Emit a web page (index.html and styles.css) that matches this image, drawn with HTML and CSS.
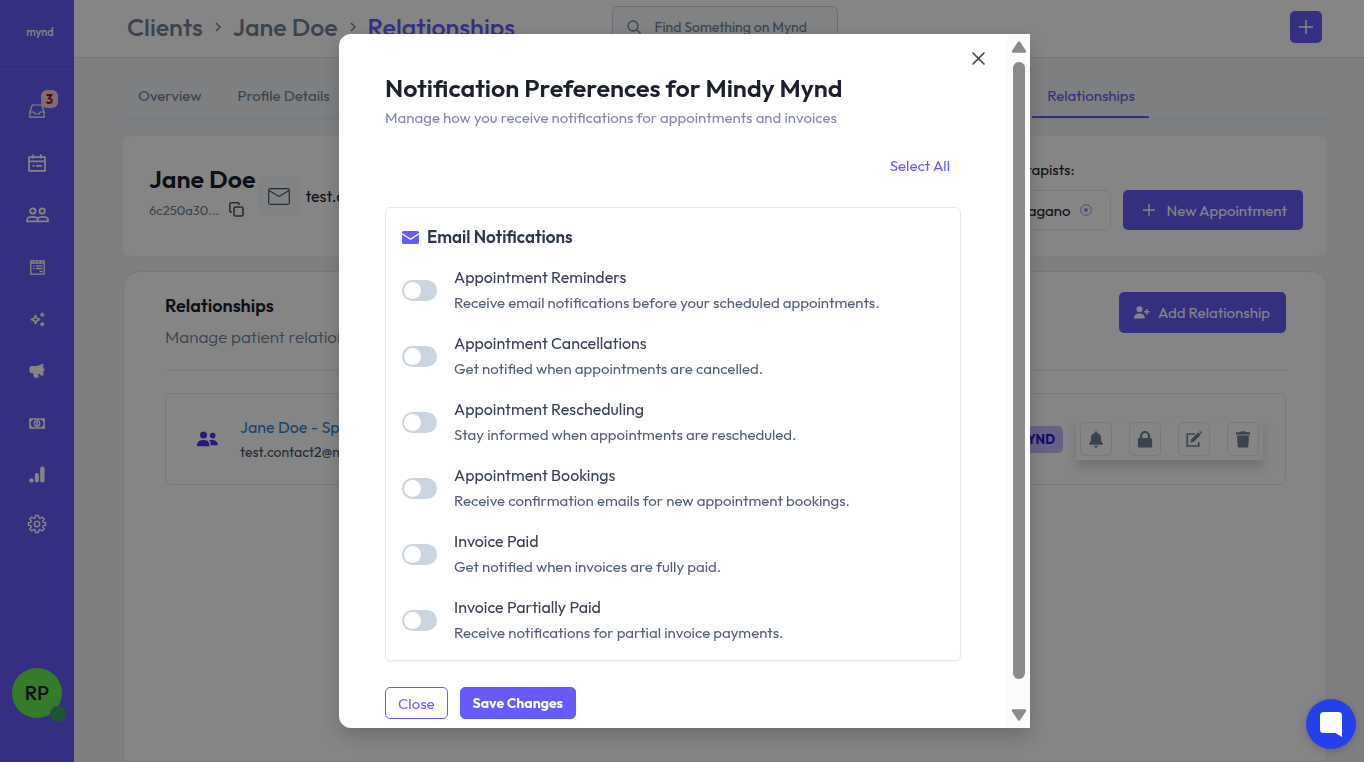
FILE: index.html
```html
<!DOCTYPE html>
<html lang="en">
<head>
    <meta charset="UTF-8">
    <meta name="viewport" content="width=device-width, initial-scale=1.0">
    <title>Mynd - Relationships</title>
    <link rel="stylesheet" href="styles.css">
</head>

<body>
    <aside class="sidebar">
        <div class="logo">mynd</div>
        <nav class="side-nav">
            <a href="#" aria-label="Inbox">
                <svg width="16" height="14" viewBox="0 0 16 14" fill="none" stroke="currentColor" stroke-width="1.2" stroke-linejoin="round"><path d="M.8 8 3.4 1h9.2l2.6 7v5.2H.8V8h4l1 2h4.4l1-2h4"/></svg>
                <span class="badge">3</span>
            </a>
            <a href="#" aria-label="Calendar">
                <svg width="18" height="18" viewBox="0 0 18 18" fill="none" stroke="currentColor" stroke-width="1.7" stroke-linejoin="round"><path d="M1 3.2h16v13.6H1zM1 7.4h16M5.2.4v4M12.8.4v4"/><path d="M4.6 11.8h1.8M8 11.8h6"/></svg>
            </a>
            <a href="#" aria-label="Clients">
                <svg width="23" height="16" viewBox="0 0 23 16" fill="none" stroke="currentColor" stroke-width="1.8" stroke-linejoin="round"><circle cx="6.8" cy="4" r="2.7"/><circle cx="16.2" cy="4" r="2.7"/><path d="M1 14.4v-1.6c0-2 3-3 5.600-3s5 1 5 3v1.600zM11.600 14.400H22v-1.600c0-2-3-3-5.600-3-2 0-3.600.5-4.600 1.600"/></svg>
            </a>
            <a href="#" aria-label="Forms">
                <svg width="15" height="15" viewBox="0 0 15 15" fill="none" stroke="currentColor" stroke-width="1.3"><path d="M.8.8h13.400v13.400H.8zM1 3.200h13M3 5.800h1.500M6 5.800h6.500M3 8.500h1.500M6 8.500h6.500M9.500 11.500h3M3.500 1v2M7 1v2M10.500 1v2"/></svg>
            </a>
            <a href="#" aria-label="Assistant">
                <svg width="15" height="15" viewBox="0 0 15 15" fill="none" stroke="currentColor" stroke-width="1.6" stroke-linejoin="round"><path d="m5.500 3.300 1.200 3 3 1.200-3 1.200-1.200 3-1.200-3-3-1.200 3-1.200z"/><path d="M12.300.6v4.400M10.100 2.800h4.400M12.300 10v4.400M10.100 12.200h4.400"/></svg>
            </a>
            <a href="#" aria-label="Marketing">
                <svg width="16" height="16" viewBox="0 0 16 16" fill="currentColor"><path d="M13 .8c.7-.4 1.300 0 1.300.7v3.700c.7.2 1.200.8 1.200 1.600s-.5 1.400-1.200 1.600v3.700c0 .8-.7 1.100-1.300.6-1.300-1.100-2.700-1.900-4.200-2.300.1.900.3 1.700.8 2.400.5.8.2 2-.9 2H6.200c-.6 0-1-.3-1.200-.8-.5-1.200-.8-2.500-.8-3.700H3a2.500 2.500 0 0 1-2.500-2.500V5.500A2.500 2.500 0 0 1 3 3h4c2.300 0 4.400-.9 6-2.200z"/></svg>
            </a>
            <a href="#" aria-label="Billing">
                <svg width="16" height="11" viewBox="0 0 16 11" fill="none" stroke="currentColor"><path stroke-width="1.5" d="M.9.9h14.200v9.200H.9z"/><circle cx="8" cy="5.500" r="2.700" stroke-width="1.400"/><path stroke-width="1.600" d="M8 4v3M1 3.400 3.500 1M15 3.400 12.500 1M1 7.600 3.500 10M15 7.600 12.500 10"/></svg>
            </a>
            <a href="#" class="short" aria-label="Reports">
                <svg width="16" height="17" viewBox="0 0 16 17" fill="currentColor"><circle cx="2.400" cy="14.400" r="2.200"/><rect x="5.900" y="7" width="4" height="9.600" rx="2"/><rect x="11.200" y=".6" width="4.300" height="16" rx="2"/></svg>
            </a>
            <a href="#" class="short" aria-label="Settings">
                <svg width="20" height="20" viewBox="0 0 24 24" fill="none" stroke="currentColor" stroke-width="1.7" stroke-linejoin="round"><circle cx="12" cy="12" r="3.200"/><path d="m10.200 1.800-.5 3-1.500.6-2.500-1.700L3.400 6l1.800 2.500-.6 1.500-3 .5v3l3 .5.600 1.500-1.800 2.500 2.300 2.300 2.500-1.700 1.500.6.500 3h3.600l.5-3 1.500-.6 2.500 1.700 2.300-2.300-1.800-2.500.6-1.500 3-.5v-3l-3-.5-.6-1.500L20.600 6l-2.300-2.300-2.500 1.700-1.500-.6-.5-3z"/></svg>
            </a>
        </nav>
        <div class="avatar">RP<span class="status"></span></div>
    </aside>

    <div class="page">
        <header class="topbar">
            <nav class="breadcrumb">
                <a href="#">Clients</a>
                <svg width="6" height="10" viewBox="0 0 6 10" fill="none" stroke="currentColor" stroke-width="1.5"><path d="m1 1 4 4-4 4"/></svg>
                <a href="#">Jane Doe</a>
                <svg width="6" height="10" viewBox="0 0 6 10" fill="none" stroke="currentColor" stroke-width="1.5"><path d="m1 1 4 4-4 4"/></svg>
                <a href="#" class="current">Relationships</a>
            </nav>
            <div class="search">
                <svg width="14" height="14" viewBox="0 0 14 14" fill="none" stroke="currentColor" stroke-width="1.3" stroke-linecap="round"><circle cx="6" cy="6" r="5"/><path d="m9.700 9.700 3.500 3.500"/></svg>
                <input type="text" aria-label="Search" placeholder="Find Something on Mynd">
            </div>
            <button class="add-btn" aria-label="Add">
                <svg width="14" height="14" viewBox="0 0 14 14" stroke="currentColor" stroke-width="1.5"><path d="M7 0v14M0 7h14"/></svg>
            </button>
        </header>

        <main>
            <nav class="tabs">
                <a href="#">Overview</a>
                <a href="#">Profile Details</a>
                <a href="#" class="active">Relationships</a>
            </nav>

            <section class="card profile">
                <div class="who">
                    <h2>Jane Doe</h2>
                    <div class="client-id">
                        <span>6c250a30...</span>
                        <svg width="15" height="15" viewBox="0 0 15 15" fill="none" stroke="currentColor" stroke-width="1.6" stroke-linejoin="round"><rect x="5" y="5" width="9" height="9" rx="1.500"/><path d="M3 10H2a1.200 1.200 0 0 1-1.200-1.200V2A1.200 1.200 0 0 1 2 .8h6.800A1.200 1.200 0 0 1 10 2v1"/></svg>
                    </div>
                </div>
                <button class="mail-btn" aria-label="Email">
                    <svg width="22" height="17" viewBox="0 0 22 17" fill="none" stroke="currentColor" stroke-width="1.2" stroke-linejoin="round"><rect x=".7" y=".7" width="20.600" height="15.600" rx="1.500"/><path d="m1 2.500 10 6 10-6"/></svg>
                </button>
                <span class="mail">test.contact</span>
                <div class="therapists">
                    <p>Therapists:</p>
                    <div class="therapist">
                        <span>Pagano</span>
                        <svg width="12" height="12" viewBox="0 0 12 12" fill="none" stroke="currentColor"><circle cx="6" cy="6" r="5.300"/><circle cx="6" cy="6" r="1.500" fill="currentColor"/></svg>
                    </div>
                </div>
                <button class="btn new-btn">
                    <svg width="12" height="12" viewBox="0 0 12 12" stroke="currentColor" stroke-width="1.4"><path d="M6 0v12M0 6h12"/></svg>
                    New Appointment
                </button>
            </section>

            <section class="card relations">
                <div class="relations-head">
                    <div>
                        <h3>Relationships</h3>
                        <p>Manage patient relationships</p>
                    </div>
                    <button class="btn">
                        <svg width="16" height="13" viewBox="0 0 16 13" fill="currentColor"><circle cx="5.500" cy="3.200" r="3"/><path d="M0 12.500C0 9 2 7.500 5.500 7.500s5.300 1.500 5.300 5zM12.100 3h1.500v2h2v1.500h-2v2h-1.500v-2h-2V5h2z"/></svg>
                        Add Relationship
                    </button>
                </div>
                <div class="relation">
                    <svg class="people" width="21" height="16" viewBox="0 0 21 16" fill="currentColor"><circle cx="6.500" cy="4" r="3.500"/><circle cx="15.700" cy="4.600" r="2.800"/><path d="M0 15.300C0 11 2 9 6.500 9s6 2 6 6.300zM13.800 14.300c0-2.500-.7-4-1.800-5 4.800-1.100 8.800.2 8.800 5z"/></svg>
                    <div class="contact">
                        <a href="#">Jane Doe - Spouse</a>
                        <p>test.contact2@mynd.com</p>
                    </div>
                    <span class="tag">MYND</span>
                    <div class="actions">
                        <button aria-label="Notifications">
                            <svg width="14" height="17" viewBox="0 0 14 17" fill="currentColor"><path d="M6 1.300a1 1 0 0 1 2 0v.4c2.500.5 4 2.500 4 5 0 3.300.8 4.600 1.800 5.700.5.600.1 1.400-.6 1.400H.8c-.7 0-1.100-.8-.6-1.400C1.200 11.300 2 10 2 6.700c0-2.500 1.500-4.500 4-5zM5 14.800h4a2 2 0 0 1-4 0z"/></svg>
                        </button>
                        <button aria-label="Permissions">
                            <svg width="16" height="17" viewBox="0 0 16 17"><rect x=".8" y="7" width="14.400" height="9.500" rx="1.500" fill="currentColor"/><path d="M4 8V5a4 4 0 0 1 8 0v3" fill="none" stroke="currentColor" stroke-width="2.200"/></svg>
                        </button>
                        <button aria-label="Edit">
                            <svg width="17" height="16" viewBox="0 0 17 16" fill="none" stroke="currentColor"><path d="M9 3H1.200v12h11.600v-4" stroke-width="1.600"/><path d="m6 10 7.500-7.500" stroke-width="3.400"/><path d="m14.300 1.700.8-.8" stroke-width="3"/><path d="M4.400 11.600 5 8.800l2.200 2.200z" fill="currentColor" stroke="none"/></svg>
                        </button>
                        <button aria-label="Delete">
                            <svg width="14" height="17" viewBox="0 0 14 17" fill="currentColor"><path d="M0 1.300h4.200L5 .2h4l.8 1.100H14v2.100H0zM1 4.500h12l-.7 10.800c0 .8-.6 1.300-1.400 1.300H3.100c-.8 0-1.400-.5-1.400-1.300z"/></svg>
                        </button>
                    </div>
                </div>
            </section>
        </main>
    </div>

    <div class="overlay">
        <div class="modal" role="dialog" aria-labelledby="modal-title">
            <div class="modal-content">
                <button class="close-x" aria-label="Close dialog">
                    <svg width="13" height="13" viewBox="0 0 13 13" stroke="currentColor" stroke-width="1.6" stroke-linecap="round"><path d="m1 1 11 11M12 1 1 12"/></svg>
                </button>
                <h1 id="modal-title">Notification Preferences for Mindy Mynd</h1>
                <p class="subtitle">Manage how you receive notifications for appointments and invoices</p>
                <button class="select-all">Select All</button>

                <form id="preferences">
                    <h2>
                        <svg width="17" height="13" viewBox="0 0 17 13" fill="currentColor"><path d="M1.500 0h14A1.400 1.400 0 0 1 17 1.400v.5L8.500 7.400 0 1.900v-.5A1.400 1.400 0 0 1 1.500 0z"/><path d="M0 3.600 8.500 9 17 3.600v8A1.400 1.400 0 0 1 15.500 13h-14A1.400 1.400 0 0 1 0 11.600z"/></svg>
                        Email Notifications
                    </h2>
                    <div class="pref">
                        <input type="checkbox" id="reminders">
                        <label for="reminders">Appointment Reminders <small>Receive email notifications before your scheduled appointments.</small></label>
                    </div>
                    <div class="pref">
                        <input type="checkbox" id="cancellations">
                        <label for="cancellations">Appointment Cancellations <small>Get notified when appointments are cancelled.</small></label>
                    </div>
                    <div class="pref">
                        <input type="checkbox" id="rescheduling">
                        <label for="rescheduling">Appointment Rescheduling <small>Stay informed when appointments are rescheduled.</small></label>
                    </div>
                    <div class="pref">
                        <input type="checkbox" id="bookings">
                        <label for="bookings">Appointment Bookings <small>Receive confirmation emails for new appointment bookings.</small></label>
                    </div>
                    <div class="pref">
                        <input type="checkbox" id="paid">
                        <label for="paid">Invoice Paid <small>Get notified when invoices are fully paid.</small></label>
                    </div>
                    <div class="pref">
                        <input type="checkbox" id="partially-paid">
                        <label for="partially-paid">Invoice Partially Paid <small>Receive notifications for partial invoice payments.</small></label>
                    </div>
                </form>

                <div class="modal-buttons">
                    <button class="outline">Close</button>
                    <button class="save" type="submit" form="preferences">Save Changes</button>
                </div>
            </div>
            <div class="scrollbar">
                <svg width="16" height="12" viewBox="0 0 16 12" fill="currentColor"><path d="M7 .8a1.300 1.300 0 0 1 2 0l6 9c.5 1 0 2-1 2H2c-1 0-1.500-1-1-2z"/></svg>
                <span class="thumb"></span>
                <svg width="16" height="12" viewBox="0 0 16 12" fill="currentColor"><path d="M7 11.200a1.300 1.300 0 0 0 2 0l6-9c.5-1 0-2-1-2H2c-1 0-1.500 1-1 2z"/></svg>
            </div>
        </div>
    </div>

    <button class="chat" aria-label="Open chat">
        <svg width="22" height="25" viewBox="0 0 22 25" fill="#fff"><path d="M3.500 0h15A3.500 3.500 0 0 1 22 3.500V25l-6.500-4h-12A3.500 3.500 0 0 1 0 17.500v-14A3.500 3.500 0 0 1 3.500 0z"/></svg>
    </button>
</body>
</html>
```
FILE: styles.css
```css
/* General Styles */
* {
    margin: 0;
    padding: 0;
    box-sizing: border-box;
}

body {
    font-family: 'Outfit', Lato, 'Liberation Sans', sans-serif;
    font-size: 15px;
    height: 100vh;
    background: #f1f4f8;
    color: #1a202c;
    display: flex;
    overflow: hidden;
}

a {
    color: inherit;
    text-decoration: none;
}

button, input {
    font-family: inherit;
    font-size: inherit;
}

button {
    border: none;
    background: none;
    cursor: pointer;
}

svg {
    display: block;
    flex-shrink: 0;
}

/* Sidebar */
.sidebar {
    width: 74px;
    flex-shrink: 0;
    background: #655bf8;
    color: #fff;
    display: flex;
    flex-direction: column;
    align-items: center;
}

.logo {
    width: 100%;
    height: 70px;
    padding: 4px 0 0 6px;
    line-height: 56px;
    text-align: center;
    font-size: 11px;
    font-weight: 500;
    border-bottom: 1px solid #7269f9;
}

.side-nav {
    padding-top: 15px;
}

.side-nav a {
    position: relative;
    width: 72px;
    height: 52px;
    display: flex;
    align-items: center;
    justify-content: center;
}

.side-nav .short {
    height: 50px;
}

.badge {
    position: absolute;
    top: 5px;
    left: 40px;
    width: 17px;
    height: 18px;
    line-height: 18px;
    border-radius: 6px;
    background: #fed0d4;
    color: #8a1030;
    text-align: center;
    font-size: 13px;
    font-weight: bold;
}

.avatar {
    position: relative;
    width: 50px;
    height: 50px;
    margin: auto 0 44px;
    line-height: 49px;
    border-radius: 50%;
    background: #64ee50;
    color: #1a202c;
    text-align: center;
    font-size: 20px;
    font-weight: 500;
}

.status {
    position: absolute;
    right: -4px;
    bottom: -4px;
    width: 16px;
    height: 16px;
    border-radius: 50%;
    background: #38a169;
}

/* Top bar */
.page {
    flex: 1;
    min-width: 0;
    display: flex;
    flex-direction: column;
}

.topbar {
    height: 58px;
    padding: 0 42px 3px 53px;
    display: grid;
    grid-template-columns: 1fr 226px 1fr;
    align-items: center;
    background: #fff;
    border-bottom: 1px solid #e2e8f0;
}

.breadcrumb {
    display: flex;
    align-items: center;
    gap: 12px;
    color: #718096;
    font-size: 25px;
    font-weight: 500;
    white-space: nowrap;
}

.breadcrumb .current {
    color: #655bf8;
}

.search {
    height: 42px;
    padding: 0 14px;
    display: flex;
    align-items: center;
    gap: 14px;
    background: #f7fafc;
    border: 1px solid #cbd5e0;
    border-radius: 6px;
    color: #718096;
}

.search input {
    width: 100%;
    border: none;
    background: none;
    outline: none;
    font-size: 14px;
}

.search input::placeholder {
    color: #718096;
}

.add-btn {
    width: 32px;
    height: 32px;
    justify-self: end;
    display: flex;
    align-items: center;
    justify-content: center;
    border-radius: 5px;
    background: #655bf8;
    color: #fff;
}

/* Page content */
main {
    flex: 1;
    padding: 18px 37px 0 49px;
    display: flex;
    flex-direction: column;
}

.tabs {
    height: 43px;
    padding-right: 178px;
    display: flex;
    gap: 7px;
    border-bottom: 1px solid #e2e8f0;
    color: #718096;
    line-height: 40px;
}

.tabs a {
    padding: 0 14px 0 15px;
}

.tabs .active {
    margin-left: auto;
    color: #655bf8;
    border-bottom: 2px solid #655bf8;
}

.card {
    background: #fff;
}

.profile {
    height: 120px;
    margin: 17px 0 15px;
    padding: 0 24px 0 26px;
    display: flex;
    align-items: center;
    border-radius: 8px;
}

.who {
    padding-bottom: 5px;
}

.who h2 {
    line-height: 32px;
    font-size: 25px;
    font-weight: 600;
}

.client-id {
    display: flex;
    align-items: center;
    gap: 10px;
    color: #718096;
    line-height: 30px;
    font-size: 13px;
}

.client-id svg {
    color: #4a5568;
}

.mail-btn {
    width: 42px;
    height: 40px;
    margin: 0 5px 0 3px;
    display: flex;
    align-items: center;
    justify-content: center;
    border-radius: 8px;
    background: #f7fafc;
    color: #4a5568;
}

.mail {
    font-size: 16px;
}

.therapists {
    align-self: flex-start;
    width: 150px;
    margin: 24px 12px 0 auto;
}

.therapists p {
    line-height: 20px;
    padding-right: 36px;
    margin-bottom: 10px;
    text-align: right;
}

.therapist {
    height: 40px;
    padding-right: 18px;
    display: flex;
    align-items: center;
    justify-content: flex-end;
    gap: 9px;
    border: 1px solid #e2e8f0;
    border-radius: 6px;
}

.therapist svg {
    color: #9f8cf5;
}

.btn {
    height: 41px;
    padding: 0 16px 0 15px;
    display: flex;
    align-items: center;
    gap: 8px;
    border-radius: 5px;
    background: #655bf8;
    color: #fff;
    white-space: nowrap;
}

.new-btn {
    height: 40px;
    margin-top: 28px;
    padding: 0 16px 0 20px;
    gap: 12px;
}

.relations {
    flex: 1;
    padding: 20px 40px 0 41px;
    border: 1px solid #e2e8f0;
    border-radius: 16px 16px 0 0;
}

.relations-head {
    padding-bottom: 16px;
    display: flex;
    justify-content: space-between;
    border-bottom: 1px solid #e2e8f0;
}

.relations-head h3 {
    line-height: 28px;
    font-size: 18px;
    font-weight: 600;
}

.relations-head p {
    line-height: 34px;
    color: #718096;
    font-size: 17px;
    font-weight: 300;
}

.relation {
    height: 92px;
    margin-top: 22px;
    padding: 0 22px 0 31px;
    display: flex;
    align-items: center;
    border: 1px solid #e2e8f0;
    border-radius: 6px;
}

.people {
    color: #4c35e0;
}

.contact {
    flex: 1;
    margin-left: 22px;
}

.contact a {
    color: #3182ce;
    line-height: 26px;
    font-size: 16px;
}

.contact p {
    line-height: 24px;
    color: #4a5568;
    font-size: 14px;
}

.tag {
    height: 27px;
    padding: 0 8px;
    line-height: 27px;
    border-radius: 5px;
    background: #c3bcff;
    color: #2a0dd0;
    font-size: 13px;
    font-weight: bold;
}

.actions {
    margin-left: 13px;
    padding: 4px;
    display: flex;
    gap: 17px;
    box-shadow: 0 8px 10px rgba(0, 0, 0, 0.15);
}

.actions button {
    width: 32px;
    height: 34px;
    display: flex;
    align-items: center;
    justify-content: center;
    border: 1px solid #e2e8f0;
    border-radius: 5px;
    color: #718096;
}

/* Modal */
.overlay {
    position: fixed;
    inset: 0;
    padding: 34px 0 34px 5px;
    display: flex;
    justify-content: center;
    background: rgba(0, 0, 0, 0.48);
}

.modal {
    width: 100%;
    max-width: 691px;
    display: flex;
    overflow: hidden;
    border-radius: 12px 0 0 12px;
    background: #fff;
    box-shadow: 0 8px 20px rgba(0, 0, 0, 0.2);
}

.modal-content {
    position: relative;
    flex: 1;
    padding: 38px 46px 0;
    display: flex;
    flex-direction: column;
}

.close-x {
    position: absolute;
    top: 18px;
    right: 22px;
    color: #3c4048;
}

.modal h1 {
    line-height: 32px;
    font-size: 25px;
    font-weight: 600;
}

.subtitle {
    line-height: 28px;
    color: #7f8ba3;
}

.select-all {
    align-self: flex-end;
    margin: 20px 11px 27px 0;
    line-height: 28px;
    color: #655bff;
}

form {
    padding: 16px 16px 14px;
    display: flex;
    flex-direction: column;
    gap: 14px;
    border: 1px solid #e2e8f0;
    border-radius: 6px;
    box-shadow: 0 1px 2px rgba(0, 0, 0, 0.06);
}

form h2 {
    display: flex;
    align-items: center;
    gap: 8px;
    line-height: 26px;
    font-size: 17px;
    font-weight: 600;
    color: #2d3748;
}

form h2 svg {
    color: #655bff;
}

.pref {
    display: flex;
    align-items: center;
    gap: 17px;
}

.pref input {
    appearance: none;
    width: 35px;
    height: 21px;
    padding: 2px;
    border-radius: 11px;
    background: #cbd5e0;
}

.pref input::before {
    content: "";
    display: block;
    width: 17px;
    height: 17px;
    border-radius: 50%;
    background: #fff;
}

.pref input:checked {
    background: #655bff;
}

.pref input:checked::before {
    margin-left: 14px;
}

.pref label {
    line-height: 26px;
    color: #374151;
    font-size: 16px;
}

.pref small {
    display: block;
    color: #525f73;
    font-size: 15px;
}

.modal-buttons {
    display: flex;
    gap: 12px;
    margin-top: 26px;
}

.modal-buttons button {
    height: 32px;
    padding: 0 12px;
    border: 1px solid #655bff;
    border-radius: 5px;
}

.modal-buttons .outline {
    color: #655bff;
}

.modal-buttons .save {
    background: #655bff;
    color: #fff;
    font-size: 14px;
    font-weight: bold;
}

.scrollbar {
    width: 23px;
    padding: 7px 0;
    display: flex;
    flex-direction: column;
    align-items: center;
    background: #fbfbfb;
    color: #8b8b8b;
}

.thumb {
    width: 12px;
    flex: 1;
    margin: 9px 0 30px;
    border-radius: 6px;
    background: #8b8b8b;
}

/* Chat launcher */
.chat {
    position: fixed;
    right: 8px;
    bottom: 13px;
    width: 50px;
    height: 50px;
    display: flex;
    align-items: center;
    justify-content: center;
    border-radius: 50%;
    background: #2340ea;
    box-shadow: 0 2px 8px rgba(0, 0, 0, 0.2);
}
```
